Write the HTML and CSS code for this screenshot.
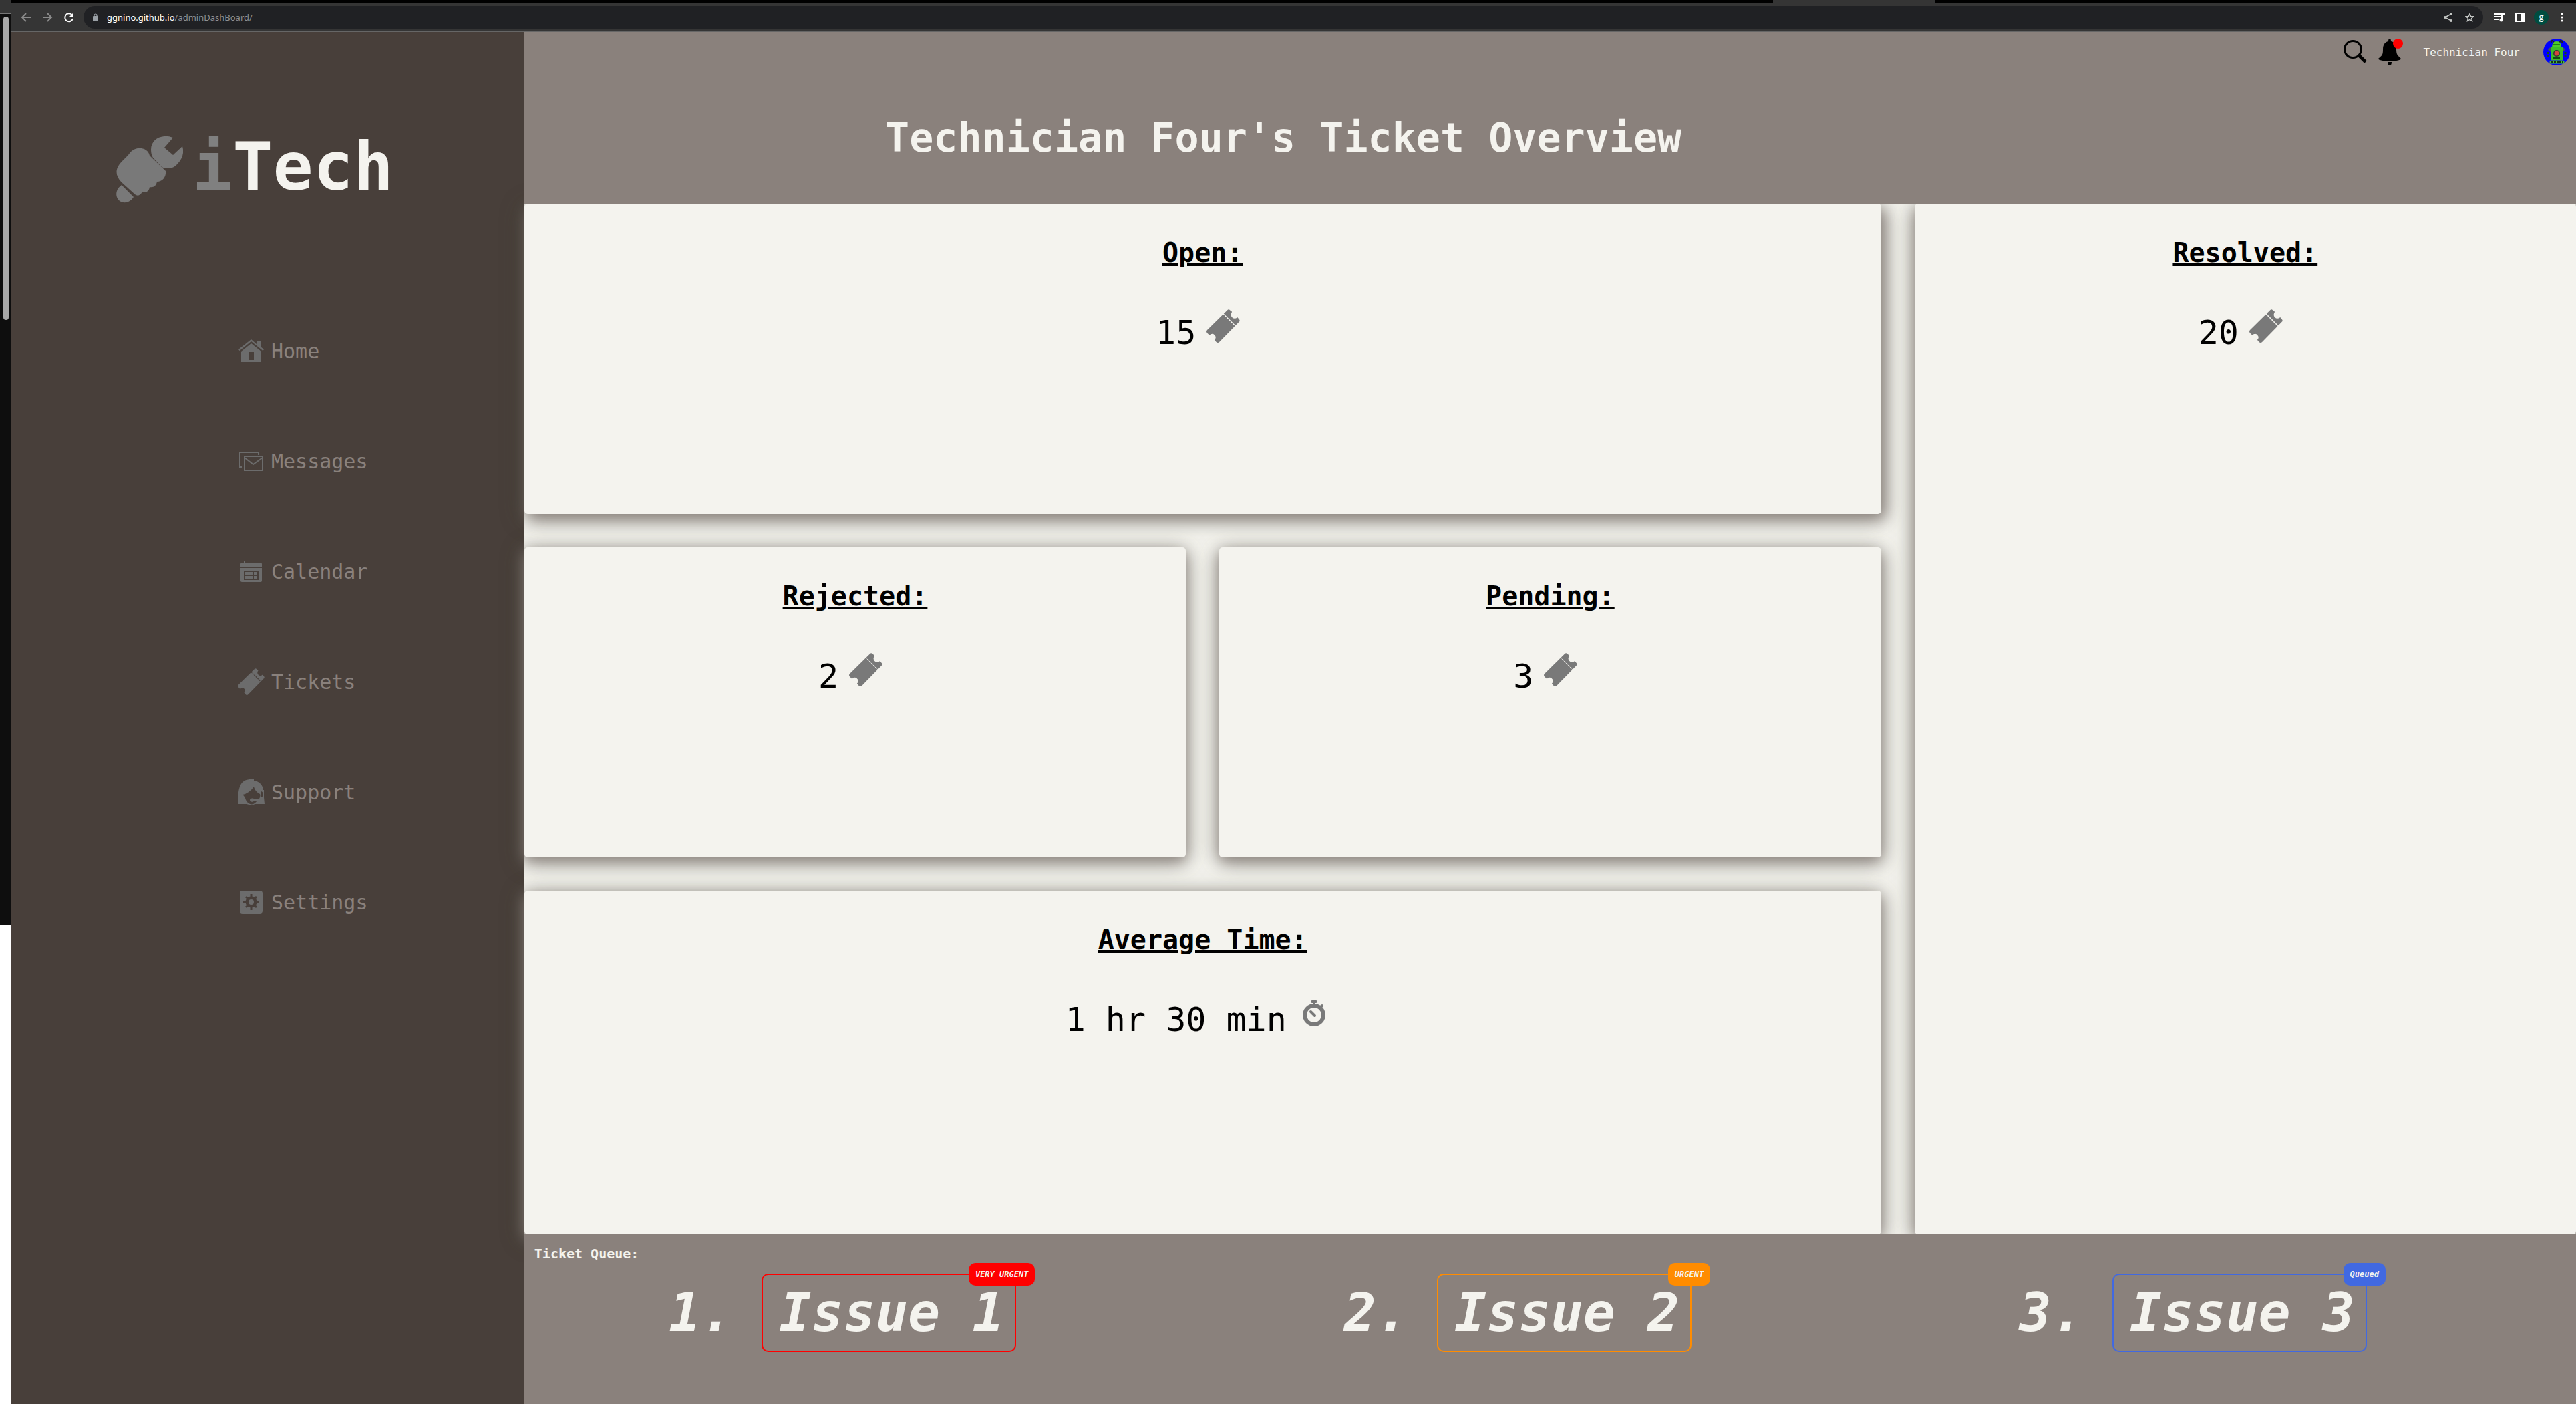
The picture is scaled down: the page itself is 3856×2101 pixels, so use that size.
FILE: index.html
```html
<!DOCTYPE html>
<html lang="en">
<head>
<meta charset="utf-8">
<title>iTech Dashboard</title>
<link rel="stylesheet" href="styles.css">
</head>
<body>
<svg class="defs" width="0" height="0" aria-hidden="true">
  <symbol id="ticket" viewBox="0 0 40 40">
    <path d="M25 1Q26.500-.5 28 1L30.500 3Q28 7 30.500 9.500Q33.500 12.500 37 9.500L39 12Q40.500 13.500 39 15L15.500 39Q13.500 41 11.500 39L9.500 36.500Q12.500 33.500 9.500 30.500Q6.500 28 3.500 31L1 28.500Q-1 26.500 1 24.500Z"/>
    <path d="M19.500 5L35 20.500" stroke="currentColor" stroke-width="1.300" stroke-dasharray="2.400 1"/>
  </symbol>
</svg>
<div class="desktop">
  <aside class="behind"><div class="behind-bar"></div><div class="behind-track"><div class="behind-thumb"></div></div></aside>
  <div class="window">
    <div class="tabs"><span class="tab"></span></div>
    <header class="toolbar">
      <button class="tool" aria-label="Back"><svg viewBox="0 0 16 16" width="16" height="16" fill="none" stroke="#8a8a8a" stroke-width="2"><path d="M15 8H2M8 2L2 8l6 6"/></svg></button>
      <button class="tool" aria-label="Forward"><svg viewBox="0 0 16 16" width="16" height="16" fill="none" stroke="#8a8a8a" stroke-width="2"><path d="M1 8h13M8 2l6 6-6 6"/></svg></button>
      <button class="tool" aria-label="Reload"><svg viewBox="0 0 16 16" width="16" height="16" fill="none" stroke="#fff" stroke-width="2"><path d="M14 10A6 6 0 1 1 12.500 4"/><path d="M15 1v6H9z" fill="#fff" stroke="none"/></svg></button>
      <div class="address">
        <svg viewBox="0 0 10 12" width="10" height="12"><rect x="1" y="4" width="8" height="8" rx="1" fill="#9aa0a6"/><path d="M3 5V3a2 2 0 0 1 4 0v2" fill="none" stroke="#9aa0a6" stroke-width="1.200"/></svg>
        <span class="url">ggnino.github.io<span class="path">/adminDashBoard/</span></span>
        <svg class="share" viewBox="0 0 13 14" width="13" height="14" fill="#c4c7c5"><path d="M11 2L2 7l9 5" fill="none" stroke="#c4c7c5" stroke-width="1.500"/><circle cx="11" cy="2" r="2"/><circle cx="2" cy="7" r="2"/><circle cx="11" cy="12" r="2"/></svg>
        <svg viewBox="0 0 14 14" width="14" height="14" fill="none" stroke="#c4c7c5" stroke-width="1.400"><path d="M7 1.500l1.600 3.900 4.200.3-3.200 2.700 1 4.100L7 10.300l-3.600 2.200 1-4.100L1.200 5.700l4.200-.3z"/></svg>
      </div>
      <div class="chrome-icons">
        <svg viewBox="0 0 16 13" width="16" height="13" fill="#fff"><path d="M0 0h10v2H0zM0 4h10v2H0zM0 8h7v2H0zM11 0h5v2h-3v8h-2z"/><circle cx="11" cy="10" r="2.500"/></svg>
        <svg viewBox="0 0 14 14" width="14" height="14"><path d="M0 0h14v14H0zM2 2v10h7V2z" fill="#fff" fill-rule="evenodd"/></svg>
        <span class="profile">g</span>
        <svg viewBox="0 0 4 14" width="4" height="14" fill="#fff"><circle cx="2" cy="2" r="1.600"/><circle cx="2" cy="7" r="1.600"/><circle cx="2" cy="12" r="1.600"/></svg>
      </div>
    </header>
    <div class="page">
      <aside class="sidebar">
        <div class="logo">
          <svg viewBox="0 0 100 100" width="100" height="100" fill="#797979"><path d="M85 2C70-4 52 3 52 20c0 5 1 9 3 12l13 14c9 4 18 2 23-4 8-8 11-17 8-27L85 28 72 17z"/><path d="M50 29C48 20 40 17 32 18c-6 1-10 4-14 10L8 38C-2 48-2 59 8 69l20 18c4 3 8 2 11-4 5 2 10 0 11-7 6 1 10-2 11-8 9 0 14-8 13-16z"/><path d="M8 73l18 18c-5 8-15 11-22 5-6-6-5-17 4-23z"/></svg>
          <span class="brand"><span class="brand-i">i</span>Tech</span>
        </div>
        <nav class="nav">
          <a href="#"><svg viewBox="0 0 40 40" width="40" height="40" fill="#6c6c6c"><path d="M20 3L1 18l1.500 2L20 6l17.500 14 1.500-2-5-4V6h-6v4z"/><path fill-rule="evenodd" d="M20 9L5 21v15h30V21zM16 22h8v12h-8z"/></svg>Home</a>
          <a href="#"><svg viewBox="0 0 40 40" width="40" height="40" fill="none" stroke="#6c6c6c" stroke-width="2"><path d="M31 11V7H3v22h3M10 13h27v21H10zM10 15l13 10 14-10"/></svg>Messages</a>
          <a href="#"><svg viewBox="0 0 40 40" width="40" height="40" fill="#6c6c6c"><path d="M4 14V9q0-2 2-2h3V4h1v3h21V4h1v3h2q2 0 2 2v5z"/><path fill-rule="evenodd" d="M4 15h32v19q0 2-2 2H6q-2 0-2-2zm5 4v14h22V19z"/><path d="M11 21h5v4h-5zM17 21h5v4h-5zM24 21h5v4h-5zM11 27h5v4h-5zM17 27h5v4h-5zM24 27h5v4h-5z"/></svg>Calendar</a>
          <a href="#"><svg class="nav-ticket" width="40" height="40"><use href="#ticket"/></svg>Tickets</a>
          <a href="#"><svg viewBox="0 0 40 40" width="40" height="40" fill="#6c6c6c"><path fill-rule="evenodd" d="M0 38C0 10 5 1 20 1h4v2c8 1 13 6 14 14h1v11l1 10H26l-6 2-7-2zM24 12C19 19 13 23 7 24c3 2 4 5 5 8 5 9 12 8 17 1h-4c-3 3-7 2-7-1s5-3 7-1h6c2-2 3-5 2-8-4-2-8-6-9-11zM35 19v9c4-1 4-8 0-9z"/></svg>Support</a>
          <a href="#"><svg viewBox="0 0 40 40" width="40" height="40"><rect x="3" y="3" width="34" height="34" rx="4" fill="#6c6c6c"/><circle cx="20" cy="20" r="6" fill="none" stroke="#483f3a" stroke-width="5"/><path d="M20 8v24M8 20h24M12 12l16 16M28 12L12 28" stroke="#483f3a" stroke-width="3"/><circle cx="20" cy="20" r="4" fill="#6c6c6c"/></svg>Settings</a>
        </nav>
      </aside>
      <header class="header">
        <div class="user">
          <button class="icon-button" aria-label="Search"><svg viewBox="0 0 35 36" width="35" height="36" fill="none" stroke="#000"><circle cx="14" cy="14" r="12.500" stroke-width="3"/><path d="M22 22l3 3" stroke-width="3"/><path d="M24 24l9 9" stroke-width="5"/></svg></button>
          <button class="icon-button bell" aria-label="Notifications"><svg viewBox="0 0 34 40" width="34" height="40"><path d="M17 0q2 0 2 4c6 1 8 6 8 12 0 8 2 9 7 14-1 5-33 5-34 0 6-5 7-6 7-14C7 9 10 5 15 4q0-4 2-4zM14 35h6q0 5-3 5t-3-5z"/></svg><span class="dot"></span></button>
          <span class="user-name">Technician Four</span>
          <svg class="avatar" viewBox="0 0 40 40" width="40" height="40"><circle cx="20" cy="20" r="20" fill="#00f"/><path d="M12 6q-1-3 2-3l3 4M28 6q1-3-2-3l-3 4" stroke="#222" stroke-width="2" fill="none"/><path d="M7 17q1-4 6-4h14q5 0 6 4l-4 3H11z" fill="#3a5060"/><path d="M7 20v10M33 20v10" stroke="#194a20" stroke-width="3" stroke-dasharray="3 2"/><path d="M13 13q0-9 7-9t7 9z" fill="#4ccc28"/><path d="M11 12h18v20H11z" fill="#3bbd28"/><path d="M15 9h10" stroke="#176314" stroke-width="1.500"/><circle cx="20" cy="22" r="5" fill="#333"/><circle cx="20" cy="22" r="3.500" fill="#d44838"/><path d="M15 29h10" stroke="#134c12" stroke-width="2" stroke-dasharray="2 1"/><path d="M12 35h17" stroke="#4ccc28" stroke-width="5" stroke-linecap="round"/><path d="M12 35h17" stroke="#143018" stroke-width="3" stroke-dasharray="3 1"/></svg>
        </div>
        <h1>Technician Four's Ticket Overview</h1>
      </header>
      <main class="cards">
        <section class="card open"><h2>Open:</h2><p>15<svg class="stat-icon" width="50" height="50"><use href="#ticket"/></svg></p></section>
        <section class="card rejected"><h2>Rejected:</h2><p>2<svg class="stat-icon" width="50" height="50"><use href="#ticket"/></svg></p></section>
        <section class="card pending"><h2>Pending:</h2><p>3<svg class="stat-icon" width="50" height="50"><use href="#ticket"/></svg></p></section>
        <section class="card average"><h2>Average Time:</h2><p>1 hr 30 min<svg viewBox="0 0 50 50" width="50" height="50" fill="none" stroke="#797979"><circle cx="25" cy="28" r="14" stroke-width="6"/><path d="M22 8h6M25 9v4M35 16l2-2M20 23l6 6" stroke-width="4" stroke-linecap="round"/></svg></p></section>
        <section class="card resolved"><h2>Resolved:</h2><p>20<svg class="stat-icon" width="50" height="50"><use href="#ticket"/></svg></p></section>
      </main>
      <footer class="queue">
        <h3>Ticket Queue:</h3>
        <ol>
          <li class="very-urgent"><span>1.</span><span class="issue">Issue 1<span class="badge">VERY URGENT</span></span></li>
          <li class="urgent"><span>2.</span><span class="issue">Issue 2<span class="badge">URGENT</span></span></li>
          <li class="queued"><span>3.</span><span class="issue">Issue 3<span class="badge">Queued</span></span></li>
        </ol>
      </footer>
    </div>
  </div>
</div>
</body>
</html>
```

FILE: styles.css
```css
* { box-sizing: border-box; }
body { margin: 0; font-family: "DejaVu Sans Mono", monospace; background: #fff; }
h1, h2, h3, p, ol { margin: 0; padding: 0; }
button { border: 0; padding: 0; background: none; display: flex; }
svg { display: block; flex: none; }
.defs { position: absolute; }

.desktop { display: grid; grid-template-columns: 17px 1fr; min-height: 100vh; }
.behind-bar { height: 21px; background: #353535; border-bottom: 1px solid #777; }
.behind-track { height: 1363px; background: #0e0e0e; padding: 4px 4px 0 5px; }
.behind-thumb { height: 454px; border-radius: 4px; background: #a9a9a9; }

.window { display: flex; flex-direction: column; min-width: 0; }
.tabs { height: 5px; background: #000; display: flex; padding-left: 68.7%; }
.tab { width: 242px; background: #353535; }
.toolbar { height: 43px; background: #353535; border-bottom: 1px solid #666; display: flex; align-items: center; gap: 16px; padding: 0 19px 0 14px; }
.address { flex: 1; height: 34px; margin: 0 0 0 -2px; border-radius: 17px; background: #202124; display: flex; align-items: center; gap: 12px; padding: 0 13px; }
.url { font: 13px "Noto Sans", sans-serif; color: #fff; }
.path { color: #8e8f91; }
.share { margin: 0 7px 0 auto; }
.chrome-icons { display: flex; align-items: center; gap: 16px; }
.profile { width: 22px; height: 22px; margin: 0 2px 0 -2px; border-radius: 50%; background: #004d40; color: #fff; font: 13px/20px "Open Sans", sans-serif; text-align: center; }

.page { flex: 1; display: grid; grid-template-columns: 20% 1fr; grid-template-rows: 257px 1fr 254px; }
.sidebar { grid-row: 1 / 4; background: #483f3a; padding-top: 140px; }
.logo { display: flex; gap: 14px; padding-left: 157px; }
.logo svg { margin-top: 16px; }
.brand { font-size: 100px; font-weight: 700; line-height: 124px; color: #f4f3ee; }
.brand-i { color: #808080; }
.nav { margin: 193px 0 0 339px; display: flex; flex-direction: column; gap: 125px; }
.nav a { display: flex; align-items: center; gap: 10px; height: 40px; font-size: 30px; color: #8a817c; text-decoration: none; }
.nav-ticket { fill: #6c6c6c; color: #483f3a; }

.header { position: relative; z-index: 1; background: #8a817c; color: #f4f3ee; }
.user { display: flex; justify-content: flex-end; align-items: center; height: 60px; padding-right: 9px; }
.bell { position: relative; margin: 0 34px 0 17px; }
.dot { position: absolute; top: 0; right: -3px; width: 15px; height: 15px; border-radius: 50%; background: #f00; }
.user-name { font-size: 16px; margin-right: 35px; }
h1 { width: 74%; text-align: center; font-size: 60px; line-height: 70px; margin-top: 63px; }

.cards { background: #f4f3ee; display: grid; grid-template-columns: repeat(3, 1fr); grid-template-rows: 464px 464px 1fr; gap: 50px; }
.card { background: #f4f3ee; border-radius: 5px; padding-top: 47px; text-align: center; box-shadow: 0 6px 22px #8a817c, 0 6px 36px rgba(64, 70, 56, .4); }
.card.open { box-shadow: 6px 8px 22px #8a817c, 0 6px 36px rgba(64, 70, 56, .4); }
.open, .average { grid-column: 1 / 3; }
.resolved { grid-area: 1 / 3 / 4 / 4; }
h2 { font-size: 40px; line-height: 52px; text-decoration: underline; }
.card p { display: flex; justify-content: center; gap: 16px; margin-top: 59px; padding-right: 14px; font-size: 50px; line-height: 70px; }
.stat-icon { fill: #797979; color: #f4f3ee; }

.queue { position: relative; background: #8a817c; color: #f4f3ee; padding-top: 15px; }
h3 { font-size: 20px; line-height: 28px; padding-left: 15px; }
ol { list-style: none; display: grid; grid-template-columns: repeat(3, 1fr); padding: 16px 39px 0 0; }
li { display: flex; align-items: center; justify-content: center; gap: 43px; padding-right: 58px; font-size: 80px; font-style: italic; font-weight: 700; }
.issue { position: relative; border: 2px solid var(--tone); border-radius: 10px; padding: 0 16px 0 24px; line-height: 113px; }
.badge { position: absolute; top: -18px; right: -30px; height: 34px; padding: 0 10px; border-radius: 10px; background: var(--tone); font-size: 12px; line-height: 34px; }
.very-urgent { --tone: #f00; }
.urgent { --tone: #ff8c00; }
.queued { --tone: #4169e1; }
```
